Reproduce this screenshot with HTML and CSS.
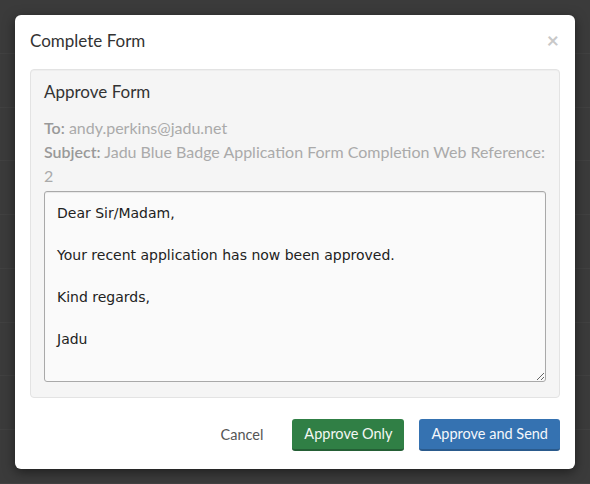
FILE: index.html
```html
<!DOCTYPE html>
<html>
<head>
<meta charset="utf-8">
<link rel="stylesheet" href="styles.css">
</head>
<body>
<div class="backdrop">
  <div class="bg-row"></div>
  <div class="bg-row"></div>
  <div class="bg-row"></div>
  <div class="bg-row"></div>
  <div class="bg-row"></div>
  <div class="bg-row"></div>
  <div class="bg-row"></div>
  <div class="bg-row"></div>
  <div class="bg-row"></div>
</div>
<div class="modal">
  <div class="modal-header">
    <h3 class="modal-title">Complete Form</h3>
    <span class="close">×</span>
  </div>
  <div class="modal-body">
    <div class="well">
      <h4 class="well-title">Approve Form</h4>
      <p class="meta"><span class="label">To:</span> andy.perkins@jadu.net</p>
      <p class="meta"><span class="label">Subject:</span> Jadu Blue Badge Application Form Completion Web Reference: 2</p>
      <textarea class="message">Dear Sir/Madam,

Your recent application has now been approved.

Kind regards,

Jadu</textarea>
    </div>
  </div>
  <div class="modal-footer">
    <button class="btn btn-link">Cancel</button>
    <button class="btn btn-success">Approve Only</button>
    <button class="btn btn-primary">Approve and Send</button>
  </div>
</div>
</body>
</html>
```

FILE: styles.css
```css
html, body {
  margin: 0;
  padding: 0;
  height: 100%;
}
body {
  background: #3b3b3b;
  font-family: Lato, "Open Sans", sans-serif;
  position: relative;
  overflow: hidden;
}
.backdrop {
  display: flex;
  flex-direction: column;
  height: 100%;
}
.bg-row {
  flex: 1;
  border-bottom: 1px solid #414141;
}
.modal {
  position: absolute;
  left: 15px;
  top: 15px;
  width: 560px;
  background: #fff;
  border-radius: 6px;
  box-shadow: 0 3px 12px rgba(0,0,0,0.5);
}
.modal-header {
  display: flex;
  justify-content: space-between;
  align-items: center;
  padding: 15px 15px 0 15px;
  height: 22px;
}
.modal-title {
  margin: 0;
  font-size: 17px;
  font-weight: 400;
  color: #333;
  line-height: 22px;
}
.close {
  font-size: 21px;
  font-weight: 700;
  color: #c8c8c8;
  line-height: 22px;
  margin-right: 1px;
  margin-top: -2px;
}
.modal-body {
  padding: 17px 15px 0 15px;
}
.well {
  background: #f5f5f5;
  border: 1px solid #e3e3e3;
  border-radius: 4px;
  padding: 10px 13px 15px 13px;
  box-shadow: inset 0 1px 1px rgba(0,0,0,0.03);
}
.well-title {
  margin: 0 0 12px 0;
  font-size: 17px;
  font-weight: 400;
  color: #333;
  line-height: 24px;
}
.meta {
  margin: 0;
  font-size: 16px;
  line-height: 24px;
  color: #aaa;
}
.label {
  color: #999;
  font-weight: 600;
}
.message {
  display: block;
  box-sizing: border-box;
  width: 100%;
  height: 191px;
  margin-top: 3px;
  padding: 11px 12px;
  border: 1px solid #a9a9a9;
  border-radius: 3px;
  background: #fafafa;
  box-shadow: inset 0 1px 1px rgba(0,0,0,0.075);
  font-family: "DejaVu Sans", Verdana, sans-serif;
  font-size: 14px;
  line-height: 21px;
  color: #222;
  resize: vertical;
}
.modal-footer {
  display: flex;
  justify-content: flex-end;
  align-items: center;
  gap: 15px;
  padding: 21px 15px 18px 15px;
}
.btn {
  font-family: Lato, "Open Sans", sans-serif;
  font-size: 14.5px;
  height: 32px;
  padding: 0 12px;
  border-radius: 3px;
  border: none;
  line-height: 30px;
}
.btn-link {
  background: transparent;
  color: #555;
  margin-right: 2px;
}
.btn-success {
  background: #307f45;
  color: #f4f8f4;
  border-bottom: 2px solid #245f35;
}
.btn-primary {
  background: #3572b1;
  color: #f4f7fb;
  border-bottom: 2px solid #2a5a8c;
}
```
